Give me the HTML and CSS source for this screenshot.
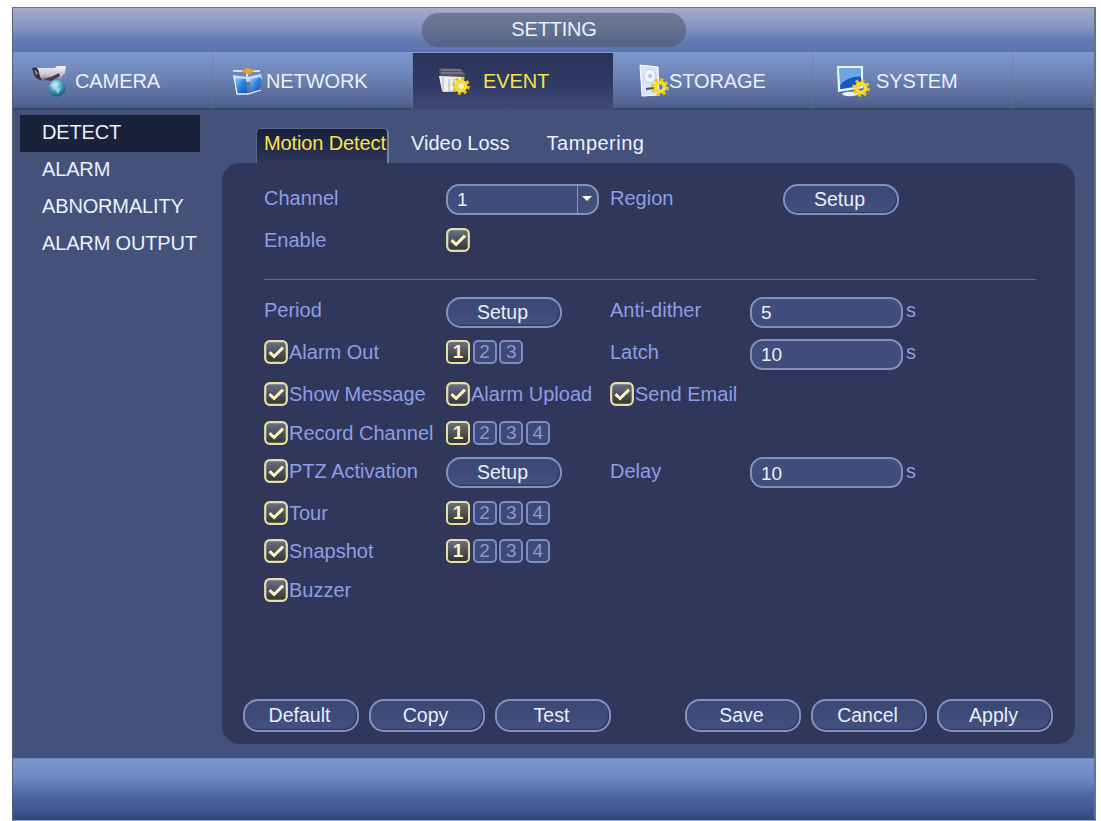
FILE: index.html
```html
<!DOCTYPE html>
<html lang="en">
<head>
<meta charset="utf-8">
<title>Setting</title>
<link rel="stylesheet" href="styles.css">
</head>
<body>
<svg class="defs" width="0" height="0" aria-hidden="true">
  <defs>
    <linearGradient id="blue" x1="0" y1="0" x2="1" y2="1"><stop offset="0" stop-color="#9fd0fa"/><stop offset=".5" stop-color="#2f7fe0"/><stop offset="1" stop-color="#0d55c0"/></linearGradient>
    <linearGradient id="metal" x1="0" y1="0" x2="0" y2="1"><stop offset="0" stop-color="#f4f2fa"/><stop offset=".6" stop-color="#c4c1d6"/><stop offset="1" stop-color="#6a6680"/></linearGradient>
    <radialGradient id="globe" cx=".4" cy=".3" r=".75"><stop offset="0" stop-color="#c3f1f5"/><stop offset=".5" stop-color="#4aa3c0"/><stop offset="1" stop-color="#12486c"/></radialGradient>
    <linearGradient id="box" x1="0" y1="0" x2="0" y2="1"><stop offset="0" stop-color="#6a718c"/><stop offset=".5" stop-color="#4c5261"/><stop offset="1" stop-color="#34352f"/></linearGradient>
    <symbol id="gear" viewBox="-8 -8 16 16">
      <circle r="6.4" fill="none" stroke="#e9c21c" stroke-width="3" stroke-dasharray="2.7 2.326"/>
      <circle r="4" fill="none" stroke="#f5dd35" stroke-width="3.4"/>
    </symbol>
    <symbol id="check" viewBox="0 0 24 24">
      <rect x="1.2" y="1.2" width="21.6" height="21.6" rx="4.5" fill="url(#box)" stroke="#e6dfa4" stroke-width="2.2"/>
      <path d="M5.500 12.200l4.600 4.300L19 7.600" fill="none" stroke="#fff6bd" stroke-width="3"/>
    </symbol>
  </defs>
</svg>
<div class="window">
  <header class="titlebar"><h1 class="title">SETTING</h1></header>
  <nav class="tabs">
    <a class="tab camera">
      <svg class="icon" width="36" height="32" viewBox="0 0 36 32">
        <path d="M2 3l22 0 2-2 9 0-1 7-3 3 1 5-4-1-2-3-8 4-9 0-5-3z" fill="url(#metal)"/>
        <path d="M1 3q6-2 7 4 1 6 3 8-6 0-8-5z" fill="#3a2f42"/>
        <path d="M3 5q3 0 4 4l-2 1z" fill="#8b7f9b"/>
        <path d="M12 14l8-2 8-4 1 3-9 5z" fill="#443c55"/>
        <circle cx="26" cy="23" r="8.500" fill="url(#globe)"/>
        <path d="M20 21q4-6 8-3l-2 4 4 2-3 5q-2-4-7-8z" fill="#b2edee" opacity=".6"/>
      </svg>
      CAMERA</a>
    <a class="tab network">
      <svg class="icon" width="32" height="28" viewBox="0 0 32 28">
        <path d="M1 4h27M15 3v9" stroke="#d5deea" stroke-width="2"/>
        <path d="M9 4l6-3 8 2-6 5z" fill="#e4a727"/>
        <path d="M1 8l14 2 14-3 1 5-15 3-13-2z" fill="#bfe0fb"/>
        <path d="M3 11l11 1 1 14-9 1z" fill="url(#blue)"/>
        <path d="M18 12l11-2-1 13-9 3z" fill="url(#blue)"/>
        <path d="M2 9l3 18 11 0 13-4" fill="none" stroke="#e4f2ff" stroke-width="1.300"/>
      </svg>
      NETWORK</a>
    <a class="tab event active">
      <svg class="icon" width="32" height="28" viewBox="0 0 32 28">
        <path d="M1 1l22 1 4 5v5H2z" fill="#50535f"/>
        <path d="M3 3h20M3 6h22" stroke="#9097a7" stroke-width="1"/>
        <path d="M1 9l25 1v14l-20 1-2-1z" fill="#eef0ef"/>
        <path d="M5 10v14M11 12v12M16 12v12" stroke="#b9bcc2" stroke-width="1.300"/>
        <use href="#gear" x="14" y="10" width="18" height="18"/>
      </svg>
      EVENT</a>
    <a class="tab storage">
      <svg class="icon" width="30" height="34" viewBox="0 0 30 34">
        <path d="M1 1l18 2 1 28-17 1z" fill="#dfe5f8" stroke="#fff"/>
        <ellipse cx="11" cy="12" rx="6" ry="7" fill="#edf2ff" stroke="#c0cae8"/>
        <circle cx="11" cy="12" r="2" fill="#b6c1df"/>
        <path d="M7 25l8-1" stroke="#4a5674" stroke-width="2"/>
        <use href="#gear" x="12" y="14" width="18" height="18"/>
      </svg>
      STORAGE</a>
    <a class="tab system">
      <svg class="icon" width="34" height="32" viewBox="0 0 34 32">
        <ellipse cx="14" cy="29" rx="8" ry="2.200" fill="#edf3fb"/>
        <path d="M1 1h26v22L2 27z" fill="#edf5ff"/>
        <path d="M3.500 3.500h21.500v17.500L4.200 24.300z" fill="#1459ba"/>
        <path d="M3.500 3.500h21.500v8q-15 0-21 9z" fill="#6ba6e6"/>
        <use href="#gear" x="16" y="14" width="18" height="18"/>
      </svg>
      SYSTEM</a>
  </nav>
  <main class="body">
    <aside class="sidebar">
      <a class="side active">DETECT</a>
      <a class="side">ALARM</a>
      <a class="side">ABNORMALITY</a>
      <a class="side">ALARM OUTPUT</a>
    </aside>
    <section class="content">
      <div class="subtabs">
        <a class="subtab current">Motion Detect</a>
        <a class="subtab loss">Video Loss</a>
        <a class="subtab tampering">Tampering</a>
      </div>
      <div class="panel">
        <div class="form">
          <div class="row r43">
            <span>Channel</span>
            <div class="field select"><span>1</span><svg class="arrow" width="20" height="27" viewBox="0 0 20 27"><path d="M.5 0v27" stroke="#8793c8"/><path d="M5 10h10l-5 5z" fill="#fff"/></svg></div>
            <span>Region</span><button class="btn region">Setup</button>
          </div>
          <div class="row r42"><span>Enable</span><svg class="chk"><use href="#check"/></svg></div>
          <div class="divider"></div>
          <div class="row r42"><span>Period</span><button class="btn">Setup</button><span>Anti-dither</span><div class="unit"><div class="field">5</div>s</div></div>
          <div class="row r42"><span class="opt"><svg class="chk"><use href="#check"/></svg>Alarm Out</span><div class="nums"><b class="num on">1</b><b class="num">2</b><b class="num">3</b></div><span>Latch</span><div class="unit"><div class="field">10</div>s</div></div>
          <div class="row r41"><span class="opt"><svg class="chk"><use href="#check"/></svg>Show Message</span><span class="opt"><svg class="chk"><use href="#check"/></svg>Alarm Upload</span><span class="opt"><svg class="chk"><use href="#check"/></svg>Send Email</span></div>
          <div class="row r37"><span class="opt"><svg class="chk"><use href="#check"/></svg>Record Channel</span><div class="nums"><b class="num on">1</b><b class="num">2</b><b class="num">3</b><b class="num">4</b></div></div>
          <div class="row r39"><span class="opt"><svg class="chk"><use href="#check"/></svg>PTZ Activation</span><button class="btn">Setup</button><span>Delay</span><div class="unit"><div class="field">10</div>s</div></div>
          <div class="row r45"><span class="opt"><svg class="chk"><use href="#check"/></svg>Tour</span><div class="nums"><b class="num on">1</b><b class="num">2</b><b class="num">3</b><b class="num">4</b></div></div>
          <div class="row r32"><span class="opt"><svg class="chk"><use href="#check"/></svg>Snapshot</span><div class="nums"><b class="num on">1</b><b class="num">2</b><b class="num">3</b><b class="num">4</b></div></div>
          <div class="row r45"><span class="opt"><svg class="chk"><use href="#check"/></svg>Buzzer</span></div>
        </div>
        <div class="actions">
          <button class="btn">Default</button><button class="btn">Copy</button><button class="btn">Test</button>
          <button class="btn save">Save</button><button class="btn">Cancel</button><button class="btn">Apply</button>
        </div>
      </div>
    </section>
  </main>
  <footer class="footer"></footer>
</div>
</body>
</html>
```
FILE: styles.css
```css
* { box-sizing: border-box; }
body {
  margin: 0;
  padding: 7px 5px 0 12px;
  height: 821px;
  overflow: hidden;
  background: #fff;
  font: 20px/24px "Liberation Sans", Arial, sans-serif;
  color: #eaf0fc;
}
.defs { position: absolute; }
.window {
  display: flex;
  flex-direction: column;
  width: 1084px;
  height: 814px;
  background: #44527b;
  border-left: 1px solid #52607f;
  border-right: 2px solid #66738f;
  border-bottom: 1px solid #8fa6cf;
}
.titlebar {
  height: 45px;
  padding-top: 5px;
  border-top: 1px solid #6c7285;
  background: linear-gradient(#a5adca, #8594c2 45%, #6079b2 75%, #5b74b0);
}
.title {
  width: 264px;
  height: 34px;
  margin: 0 0 0 409px;
  padding-top: 4px;
  border-radius: 17px;
  background: linear-gradient(#6d7895, #65718f 50%, #526187);
  box-shadow: 0 0 1px #5a688e;
  font-size: 20px;
  font-weight: normal;
  letter-spacing: -0.2px;
  text-align: center;
}
.tabs {
  display: grid;
  grid-template-columns: 200px 200px 200px 200px 200px 1fr;
  height: 58px;
  border-top: 1px solid #7e9ad0;
  border-bottom: 2px solid #3b476a;
  background: linear-gradient(#7d97ce, #6c82b4 45%, #536593 90%, #4c5c88);
}
.tab {
  display: flex;
  align-items: center;
  padding-bottom: 1px;
  border-right: 1px solid #64799f80;
  letter-spacing: -0.1px;
}
.camera { padding-left: 18px; gap: 8px; }
.network { padding-left: 19px; gap: 2px; }
.event { padding-left: 25px; gap: 13px; }
.storage { padding-left: 26px; }
.system { padding-left: 23px; gap: 6px; }
.tab.active {
  height: 57px;
  border: 0;
  color: #f7e14a;
  background: linear-gradient(#2a3259, #303b66 60%, #404c77);
}
.icon { flex: none; }
.body {
  display: flex;
  height: 648px;
}
.sidebar {
  width: 209px;
  padding: 5px 0 0 7px;
}
.side {
  display: block;
  width: 180px;
  height: 37px;
  padding: 5px 0 0 22px;
  letter-spacing: -0.15px;
  white-space: nowrap;
}
.side.active { background: #19223a; }
.content {
  width: 853px;
  padding-top: 18px;
}
.subtabs {
  display: flex;
  height: 35px;
  padding: 0 0 0 34px;
  line-height: 30px;
}
.subtab { white-space: nowrap; }
.current {
  width: 133px;
  padding-left: 7px;
  border: 1px solid #59668c;
  border-right: 2px solid #77829f;
  border-bottom: 0;
  border-radius: 5px 5px 0 0;
  color: #fbe250;
  background: linear-gradient(#171f39, #252b4c 60%, #31375b);
  line-height: 29px;
  letter-spacing: -0.12px;
}
.loss { margin: 0 37px 0 22px; }
.tampering { letter-spacing: 0.5px; }
.panel {
  display: flex;
  flex-direction: column;
  justify-content: space-between;
  height: 581px;
  padding: 13px 22px 12px 21px;
  border-radius: 18px;
  background: #31375b;
}
.form {
  padding: 0 17px 0 21px;
  color: #8e9de5;
}
.row {
  display: grid;
  grid-template-columns: 182px 164px 140px 1fr;
  align-items: center;
  white-space: nowrap;
}
.r32 { height: 32px; }
.r37 { height: 37px; }
.r39 { height: 39px; }
.r41 { height: 41px; }
.r42 { height: 42px; }
.r43 { height: 43px; }
.r45 { height: 45px; }
.divider {
  height: 1px;
  margin: 18px 0 9px;
  background: #5d699c;
}
.opt {
  display: flex;
  align-items: center;
  gap: 1px;
}
.chk {
  width: 24px;
  height: 24px;
}
.btn {
  width: 116px;
  height: 31px;
  margin: 4px 0 0;
  padding: 0 3px 1px 0;
  border: 2px solid #8390c0;
  border-radius: 15px;
  background: linear-gradient(#3b4775, #43517e);
  box-shadow: inset -1px -1px 1px #2a315d;
  color: #e8edfb;
  font: 19.500px/24px "Liberation Sans", Arial, sans-serif;
}
.region { margin-left: 33px; }
.field {
  display: flex;
  align-items: center;
  width: 153px;
  height: 31px;
  padding: 2px 0 0 9px;
  border: 2px solid #8390c0;
  border-radius: 13px;
  background: #414e7c;
  color: #e8edfb;
  font-size: 19px;
}
.select {
  justify-content: space-between;
  margin-top: 4px;
  padding: 0;
  padding-left: 9px;
}
.unit {
  display: flex;
  align-items: center;
  gap: 3px;
}
.unit .field { margin-top: 4px; }
.nums {
  display: flex;
  gap: 2.600px;
}
.num {
  width: 24px;
  height: 24px;
  border: 2px solid #7e8dbf;
  border-radius: 5px;
  background: #3d4a79;
  color: #8b9bcb;
  font-size: 19px;
  line-height: 20px;
  font-weight: normal;
  text-align: center;
}
.num.on {
  border-color: #e6dfa4;
  background: linear-gradient(#6a6f80, #34352f);
  color: #fff6c4;
  font-weight: bold;
}
.actions {
  display: flex;
  gap: 10px;
}
.actions .btn {
  height: 33px;
  margin: 0;
}
.actions .save { margin-left: auto; }
.footer {
  flex: 1;
  border-top: 1px solid #6d85b6;
  background: linear-gradient(#7d97ce, #6a86c1 35%, #4c67a3 60%, #3c538f 88%, #354574);
}
```
